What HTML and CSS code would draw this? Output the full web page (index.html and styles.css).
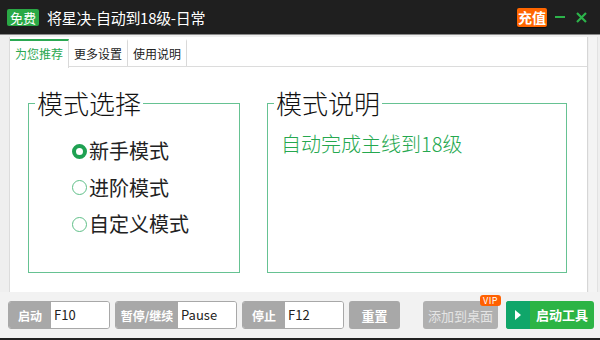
FILE: index.html
```html
<!DOCTYPE html>
<html lang="zh-CN">
<head>
    <meta charset="UTF-8">
    <title>将星决-自动到18级-日常</title>
    <link rel="stylesheet" href="styles.css">
</head>
<body>

    <!-- Title Bar -->
    <div class="titlebar">
        <span class="badge-free">免费</span>
        <span class="title">将星决-自动到18级-日常</span>
        <span class="spacer"></span>
        <span class="badge-pay">充值</span>
        <span class="win-btn">
            <svg width="10" height="10" viewBox="0 0 10 10"><rect x="0" y="4" width="10" height="2" fill="#2cb34a"/></svg>
        </span>
        <span class="win-btn">
            <svg width="11" height="11" viewBox="0 0 11 11"><path d="M1 1L10 10M10 1L1 10" stroke="#2cb34a" stroke-width="2.2" fill="none"/></svg>
        </span>
    </div>

    <!-- Main Panel -->
    <div class="main">
        <div class="panel">
            <div class="tabs">
                <div class="tab active">为您推荐</div>
                <div class="tab">更多设置</div>
                <div class="tab">使用说明</div>
            </div>
            <div class="groups">
                <fieldset class="group group-select">
                    <legend>模式选择</legend>
                    <div class="radio-list">
                        <label class="radio checked"><span class="dot"></span>新手模式</label>
                        <label class="radio"><span class="dot"></span>进阶模式</label>
                        <label class="radio"><span class="dot"></span>自定义模式</label>
                    </div>
                </fieldset>
                <fieldset class="group group-desc">
                    <legend>模式说明</legend>
                    <p class="desc">自动完成主线到18级</p>
                </fieldset>
            </div>
        </div>
        <div class="strip"></div>
    </div>

    <!-- Bottom Bar -->
    <div class="bottombar">
        <div class="hotkey"><span class="hk-label">启动</span><span class="hk-input">F10</span></div>
        <div class="hotkey hk-wide"><span class="hk-label">暂停/继续</span><span class="hk-input">Pause</span></div>
        <div class="hotkey"><span class="hk-label">停止</span><span class="hk-input">F12</span></div>
        <button class="btn btn-reset">重置</button>
        <button class="btn btn-desk">添加到桌面<span class="vip">VIP</span></button>
        <button class="btn btn-start">
            <span class="play"><svg width="8" height="10" viewBox="0 0 8 10"><path d="M1 0L7 5L1 10Z" fill="#fff"/></svg></span>
            <span class="start-text">启动工具</span>
        </button>
    </div>

</body>
</html>
```

FILE: styles.css
```css
body { margin: 0; width: 600px; height: 340px; overflow: hidden; background: #efefef; font-family: "Noto Sans CJK SC", "Noto Sans", sans-serif; color: #222; }

/* Title Bar */
.titlebar { height: 35px; background: #1f1f1f; border-bottom: 1px solid #8a8a8a; box-sizing: border-box; display: flex; align-items: center; padding: 0 11px 0 7px; }
.badge-free { background: #2aa845; color: #fff; font-size: 13px; line-height: 17px; height: 17px; padding: 0 3px; border-radius: 2px; }
.title { color: #fff; font-size: 15px; margin-left: 8px; letter-spacing: -0.3px; }
.spacer { flex: 1; }
.badge-pay { background: #ff6600; color: #fff; font-size: 14px; font-weight: bold; line-height: 19px; height: 19px; padding: 0 1px; border-radius: 2px; box-shadow: 0 1px 1px rgba(0,0,0,0.6); }
.win-btn { display: flex; margin-left: 5px; width: 15px; justify-content: center; }
.win-btn + .win-btn { margin-left: 7px; }

/* Main Panel */
.main { display: flex; padding-top: 2px; height: 257px; box-sizing: border-box; }
.panel { margin-left: 9px; width: 579px; background: #fff; border-left: 1px solid #dcdcdc; border-right: 1px solid #d6d6d6; box-sizing: border-box; }
.strip { width: 8px; margin-left: 1px; background: #f4f4f4; border-right: 1px solid #e2e2e2; }

.tabs { display: flex; padding-top: 2px; border-bottom: 1px solid #dcdcdc; height: 30px; box-sizing: border-box; }
.tab { width: 59px; font-size: 12px; text-align: center; line-height: 26px; border-right: 1px solid #d9d9d9; border-top: 2px solid transparent; box-sizing: border-box; }
.tab.active { color: #2aa852; border-top-color: #2aa852; height: 29px; background: #fff; }

.groups { display: flex; gap: 27px; padding: 21px 0 0 18px; }
.group { margin: 0; padding: 0; border: 1px solid #66c292; height: 185px; box-sizing: border-box; }
.group legend { font-size: 26px; line-height: 30px; margin-left: 6px; padding: 0 2px; color: #111; font-weight: 300; }
.group-select { width: 212px; }
.group-desc { width: 300px; }

.radio-list { padding: 15px 0 0 43px; }
.radio { display: flex; align-items: center; font-size: 20px; line-height: 36px; height: 36.5px; }
.dot { width: 15px; height: 15px; border: 1px solid #5fbf88; border-radius: 50%; box-sizing: border-box; margin-right: 2px; }
.radio.checked .dot { border: 4px solid #1fa152; }

.desc { margin: 14px 0 0 13px; font-size: 20px; line-height: 24px; color: #25a84f; font-weight: 300; }

/* Bottom Bar */
.bottombar { height: 48px; background: #f2f2f2; border-bottom: 2px solid #222; box-sizing: border-box; display: flex; align-items: center; padding-left: 8px; gap: 5px; }
.hotkey { display: flex; width: 102px; height: 28px; border: 1px solid #a8a8a8; border-radius: 3px; box-sizing: border-box; overflow: hidden; }
.hk-label { width: 42px; background: #a8a8a8; color: #fff; font-size: 12px; font-weight: bold; display: flex; align-items: center; justify-content: center; }
.hk-input { flex: 1; background: #fff; font-size: 13px; line-height: 26px; padding-left: 3px; color: #222; }
.hk-wide { width: 122px; }
.hk-wide .hk-label { width: 62px; }

.btn { height: 28px; border: none; border-radius: 3px; font-family: inherit; font-size: 13px; font-weight: bold; color: #fff; padding: 0; cursor: pointer; position: relative; }
.btn-reset { width: 51px; background: #a8a8a8; }
.btn-desk { width: 75px; margin-left: 18px; background: #b0b0b0; color: #e4e4e4; font-weight: normal; }
.vip { position: absolute; top: -6px; right: -3px; background: #ff6000; color: #fff; font-size: 9px; line-height: 11px; padding: 0 3px; border-radius: 3px; letter-spacing: 0.5px; }
.btn-start { width: 88px; margin-left: 3px; display: flex; overflow: hidden; background: #2cb445; }
.play { width: 24px; height: 100%; background: #10a66a; display: flex; align-items: center; justify-content: center; }
.start-text { flex: 1; line-height: 28px; }
```
